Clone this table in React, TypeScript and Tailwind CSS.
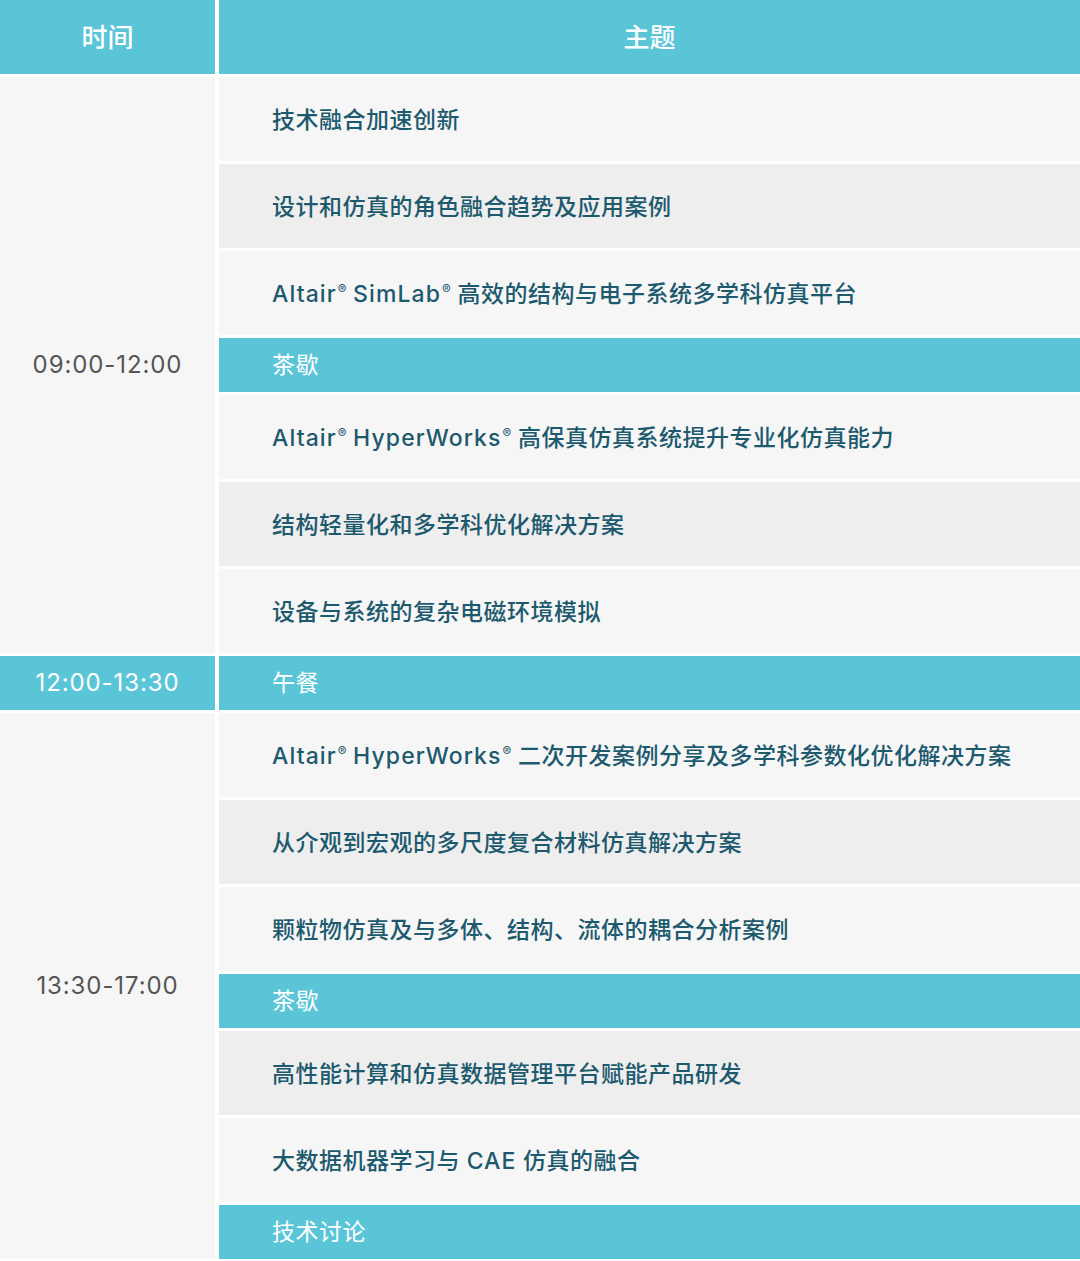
import React from 'react';

// 议程表：左列时间段（跨行），右列主题；青色行为茶歇 / 午餐 / 讨论。

type Row = { kind: 'talk' | 'break'; shade?: 'light' | 'grey'; text: React.ReactNode };

const R = () => <span className="relative -top-[8px] ml-[1px] text-[13px] font-normal tracking-normal">®</span>;

// 拉丁字母部分字距略宽，接近原图的几何无衬线体
const Latin = ({ children }: { children: React.ReactNode }) => (
  <span className="tracking-[1.1px]">{children}</span>
);

const morning: Row[] = [
  { kind: 'talk', shade: 'light', text: '技术融合加速创新' },
  { kind: 'talk', shade: 'grey', text: '设计和仿真的角色融合趋势及应用案例' },
  {
    kind: 'talk',
    shade: 'light',
    text: (
      <>
        <Latin>Altair</Latin>
        <R /> <Latin>SimLab</Latin>
        <R /> 高效的结构与电子系统多学科仿真平台
      </>
    ),
  },
  { kind: 'break', text: '茶歇' },
  {
    kind: 'talk',
    shade: 'light',
    text: (
      <>
        <Latin>Altair</Latin>
        <R /> <Latin>HyperWorks</Latin>
        <R /> 高保真仿真系统提升专业化仿真能力
      </>
    ),
  },
  { kind: 'talk', shade: 'grey', text: '结构轻量化和多学科优化解决方案' },
  { kind: 'talk', shade: 'light', text: '设备与系统的复杂电磁环境模拟' },
];

const afternoon: Row[] = [
  {
    kind: 'talk',
    shade: 'light',
    text: (
      <>
        <Latin>Altair</Latin>
        <R /> <Latin>HyperWorks</Latin>
        <R /> 二次开发案例分享及多学科参数化优化解决方案
      </>
    ),
  },
  { kind: 'talk', shade: 'grey', text: '从介观到宏观的多尺度复合材料仿真解决方案' },
  { kind: 'talk', shade: 'light', text: '颗粒物仿真及与多体、结构、流体的耦合分析案例' },
  { kind: 'break', text: '茶歇' },
  { kind: 'talk', shade: 'grey', text: '高性能计算和仿真数据管理平台赋能产品研发' },
  {
    kind: 'talk',
    shade: 'light',
    text: (
      <>
        大数据机器学习与 <Latin>CAE</Latin> 仿真的融合
      </>
    ),
  },
  { kind: 'break', text: '技术讨论' },
];

function Topic({ row }: { row: Row }) {
  if (row.kind === 'break') {
    return (
      <div className="flex h-[54px] items-center bg-[#5bc5d8] pl-[53px] pt-[1px] text-[23px] font-normal tracking-[0.5px] text-white">
        {row.text}
      </div>
    );
  }
  return (
    <div
      className={`flex h-[84px] items-center pl-[53px] pt-[3px] text-[23px] font-medium tracking-[0.5px] text-[#1d5a6e] ${
        row.shade === 'grey' ? 'bg-[#eeeeee]' : 'bg-[#f6f6f6]'
      }`}
    >
      <span>{row.text}</span>
    </div>
  );
}

function TimeCell({ label }: { label: string }) {
  return (
    <div className="flex items-center justify-center bg-[#f6f6f6] text-[24px] tracking-[0.9px] text-[#555555]">
      {label}
    </div>
  );
}

export default function App() {
  return (
    <div
      className="h-[1261px] w-[1080px] overflow-hidden bg-white"
      style={{ fontFamily: '"Inter", "Noto Sans CJK SC", sans-serif' }}
    >
      <div className="grid grid-cols-[215px_1fr] gap-x-[4px] gap-y-[3px]">
        <div className="flex h-[74px] items-center justify-center bg-[#5bc5d8] text-[26px] font-medium text-white">
          时间
        </div>
        <div className="flex h-[74px] items-center justify-center bg-[#5bc5d8] text-[26px] font-medium text-white">
          主题
        </div>

        <div className="row-span-7 grid">
          <TimeCell label="09:00-12:00" />
        </div>
        {morning.map((row, i) => (
          <Topic key={`m${i}`} row={row} />
        ))}

        <div className="flex h-[54px] items-center justify-center bg-[#5bc5d8] text-[24px] tracking-[0.9px] text-white">
          12:00-13:30
        </div>
        <div className="flex h-[54px] items-center bg-[#5bc5d8] pl-[53px] pt-[1px] text-[23px] tracking-[0.5px] text-white">
          午餐
        </div>

        <div className="row-span-7 grid">
          <TimeCell label="13:30-17:00" />
        </div>
        {afternoon.map((row, i) => (
          <Topic key={`a${i}`} row={row} />
        ))}
      </div>
    </div>
  );
}
